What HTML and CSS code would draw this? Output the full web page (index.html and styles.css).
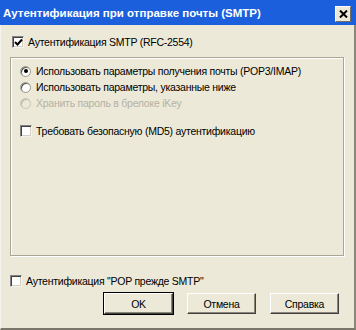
FILE: index.html
```html
<!DOCTYPE html>
<html>
<head>
<meta charset="utf-8">
<link rel="stylesheet" href="styles.css">
</head>
<body>
<div class="window">
  <div class="titlebar">
    <span class="title">Аутентификация при отправке почты (SMTP)</span>
    <span class="close"><svg width="9" height="8" viewBox="0 0 9 8"><path d="M1 0.5 L8 7.5 M8 0.5 L1 7.5" stroke="#000" stroke-width="2"/></svg></span>
  </div>
  <div class="content">
    <div class="row top-check">
      <span class="cb checked"><svg width="9" height="9" viewBox="0 0 9 9"><path d="M1 4 L3.5 6.5 L8 1.5" fill="none" stroke="#000" stroke-width="2"/></svg></span>
      <span class="label">Аутентификация SMTP (RFC-2554)</span>
    </div>
    <div class="group">
      <div class="row radio-row">
        <span class="rb on"><span class="dot"></span></span>
        <span class="label">Использовать параметры получения почты (POP3/IMAP)</span>
      </div>
      <div class="row radio-row">
        <span class="rb"></span>
        <span class="label">Использовать параметры, указанные ниже</span>
      </div>
      <div class="row radio-row disabled">
        <span class="rb"></span>
        <span class="label">Хранить пароль в брелоке iKey</span>
      </div>
      <div class="row md5-row">
        <span class="cb"></span>
        <span class="label">Требовать безопасную (MD5) аутентификацию</span>
      </div>
    </div>
    <div class="row bottom-check">
      <span class="cb"></span>
      <span class="label">Аутентификация "POP прежде SMTP"</span>
    </div>
    <div class="buttons">
      <span class="btn default">OK</span>
      <span class="btn">Отмена</span>
      <span class="btn">Справка</span>
    </div>
  </div>
</div>
</body>
</html>
```
FILE: styles.css
```css
html, body {
  margin: 0;
  padding: 0;
  background: #ece9d8;
}
.window {
  width: 356px;
  height: 330px;
  box-sizing: border-box;
  background: #ece9d8;
  border-left: 1px solid #f4f3ee;
  border-right: 2px solid #8a8778;
  border-bottom: 2px solid #7a776a;
  display: flex;
  flex-direction: column;
  font-family: "Liberation Sans", Arial, sans-serif;
  font-size: 10.5px;
  letter-spacing: -0.25px;
  color: #000;
}
.titlebar {
  height: 25px;
  flex: none;
  margin-left: -1px;
  margin-right: -2px;
  background: #1c5fdc;
  display: flex;
  align-items: center;
  justify-content: space-between;
  padding: 0 5px 0 3px;
}
.title {
  color: #fff;
  font-weight: bold;
  font-size: 11.5px;
  letter-spacing: 0;
  white-space: nowrap;
}
.close {
  width: 16px;
  height: 16px;
  box-sizing: border-box;
  background: #ece9d8;
  border-top: 1px solid #fff;
  border-left: 1px solid #fff;
  border-right: 1px solid #716f64;
  border-bottom: 1px solid #716f64;
  display: flex;
  align-items: center;
  justify-content: center;
  margin-top: 2px;
}
.content {
  flex: 1;
  display: flex;
  flex-direction: column;
  padding: 0 9px 0 9px;
}
.row {
  display: flex;
  align-items: center;
  height: 16px;
  white-space: nowrap;
}
.cb {
  width: 12px;
  height: 12px;
  box-sizing: border-box;
  flex: none;
  background: #fff;
  border-top: 1px solid #848284;
  border-left: 1px solid #848284;
  border-right: 1px solid #f4f3ee;
  border-bottom: 1px solid #f4f3ee;
  box-shadow: inset 1px 1px 0 #404040, inset -1px -1px 0 #d4d0c8;
  display: flex;
  align-items: center;
  justify-content: center;
  margin-right: 4px;
}
.rb {
  width: 11px;
  height: 11px;
  box-sizing: border-box;
  flex: none;
  border-radius: 50%;
  background: #fff;
  border: 1px solid #9a988a;
  box-shadow: inset 1px 1px 0 #555;
  display: flex;
  align-items: center;
  justify-content: center;
  margin-right: 5px;
}
.rb .dot {
  width: 4px;
  height: 4px;
  border-radius: 50%;
  background: #000;
}
.disabled .label {
  color: #b5b2a5;
}
.disabled .rb {
  background: #ece9d8;
  border-color: #c9c6b8;
  box-shadow: inset 1px 1px 0 #bcb9aa;
}
.top-check {
  margin-top: 9px;
  padding-left: 2px;
}
.group {
  margin-top: 7px;
  height: 199px;
  flex: none;
  box-sizing: border-box;
  border: 1px solid #a8a695;
  box-shadow: inset 1px 1px 0 #fff, 1px 1px 0 #fff;
  padding: 5px 0 0 9px;
  margin-right: 1px;
}
.radio-row {
  margin-bottom: 0;
}
.md5-row {
  margin-top: 12px;
  padding-left: 0;
}
.bottom-check {
  margin-top: 17px;
}
.buttons {
  display: flex;
  justify-content: flex-end;
  gap: 14px;
  margin-top: 4px;
  padding-right: 6px;
}
.btn {
  width: 69px;
  height: 21px;
  box-sizing: border-box;
  background: #ece9d8;
  border-top: 1px solid #fff;
  border-left: 1px solid #fff;
  border-right: 1px solid #404040;
  border-bottom: 1px solid #404040;
  box-shadow: inset -1px -1px 0 #8a8778;
  display: flex;
  align-items: center;
  justify-content: center;
}
.btn.default {
  outline: 1px solid #000;
}
```
